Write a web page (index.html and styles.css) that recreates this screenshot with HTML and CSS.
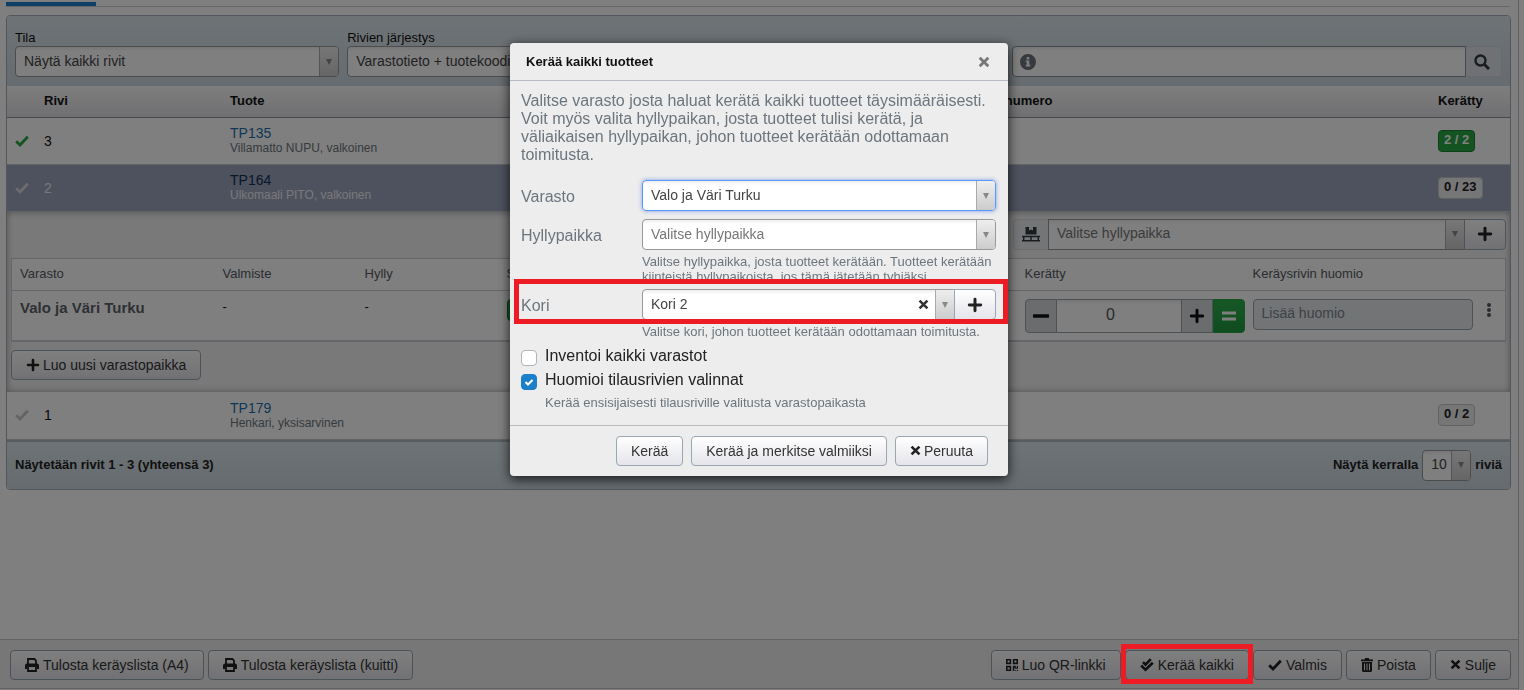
FILE: index.html
```
<!DOCTYPE html>
<html lang="fi">
<head>
<meta charset="utf-8">
<title>Kerää kaikki tuotteet</title>
<link rel="stylesheet" href="styles.css">
</head>
<body>
<svg class="sprite" aria-hidden="true">
  <symbol id="check" viewBox="0 0 14 12"><path d="M1.2 6.2 5 10 12.8 1.8" fill="none" stroke="currentColor" stroke-width="2.8"/></symbol>
  <symbol id="plus" viewBox="0 0 14 14"><path d="M7 2v10M2 7h10" fill="none" stroke="currentColor" stroke-width="2.600" stroke-linecap="round"/></symbol>
  <symbol id="minus" viewBox="0 0 14 14"><path d="M1 7h12" fill="none" stroke="currentColor" stroke-width="3" stroke-linecap="round"/></symbol>
  <symbol id="equals" viewBox="0 0 14 14"><path d="M0 4h14M0 10h14" fill="none" stroke="currentColor" stroke-width="3"/></symbol>
  <symbol id="cross" viewBox="0 0 12 12"><path d="M1.700 1.700l8.600 8.600M10.300 1.700l-8.600 8.600" fill="none" stroke="currentColor" stroke-width="2.800"/></symbol>
  <symbol id="print" viewBox="0 0 14 14"><path d="M3 6V1h6.500L11 2.500V6" fill="none" stroke="currentColor" stroke-width="1.800"/><path d="M2 5.500h10a2 2 0 0 1 2 2V11h-2V9H2v2H0V7.500a2 2 0 0 1 2-2z" fill="currentColor"/><path d="M3 9v4h8V9" fill="none" stroke="currentColor" stroke-width="1.800"/></symbol>
  <symbol id="qr" viewBox="0 0 12 12"><path d="M.8.8h3.600v3.600H.8zM7.600.8h3.600v3.600H7.600zM.8 7.600h3.600v3.600H.8z" fill="none" stroke="currentColor" stroke-width="1.600"/><path d="M6.800 6.800h3v2h1v-2H12v3H9v-1h-.7V12H6.800zM9.200 11h1v1h-1zM11 11h1v1h-1z" fill="currentColor"/></symbol>
  <symbol id="double" viewBox="0 0 14 14"><path d="M3 4.200 5.500 6.700 10.800 1.200M1.200 7.500 5.500 11.800 12.800 4.800" fill="none" stroke="currentColor" stroke-width="2.600"/></symbol>
  <symbol id="trash" viewBox="0 0 12 14"><path d="M0 1.500h3.500L4.300 0h3.400l.8 1.500H12v1.700H0zM1 4h10v8.500A1.500 1.500 0 0 1 9.500 14h-7A1.500 1.500 0 0 1 1 12.500zM3 5.500v6.800h1V5.500zm2.500 0v6.800h1V5.500zm2.500 0v6.800h1V5.500z" fill="currentColor" fill-rule="evenodd"/></symbol>
  <symbol id="search" viewBox="0 0 16 16"><circle cx="6.500" cy="6.500" r="5" fill="none" stroke="currentColor" stroke-width="2.400"/><path d="M10 10l5 5" stroke="currentColor" stroke-width="3"/></symbol>
  <symbol id="info" viewBox="0 0 16 16"><path d="M8 0a8 8 0 1 0 0 16A8 8 0 0 0 8 0zM6.700 3h2.600v2.400H6.700zM5.800 6.500h3.500v4.300h1v1.800H5.800v-1.800h1V8.300h-1z" fill="currentColor" fill-rule="evenodd"/></symbol>
  <symbol id="pallet" viewBox="0 0 18 15"><path d="M3.500 0H7v3.500l2-1 2 1V0h3.500v7.500h-11z" fill="currentColor"/><path d="M0 9.500h18M0 13.800h18M1.700 9v5M9 9v5M16.300 9v5" stroke="currentColor" stroke-width="1.500"/></symbol>
</svg>

<main class="page">
  <div class="tabs"><span class="tab-active"></span></div>

  <section class="panel">
    <form class="filters">
      <div class="field">
        <label for="tila">Tila</label>
        <div class="combo"><select id="tila"><option>Näytä kaikki rivit</option></select><span class="arrow"></span></div>
      </div>
      <div class="field">
        <label for="order">Rivien järjestys</label>
        <div class="combo"><select id="order"><option>Varastotieto + tuotekoodi</option></select><span class="arrow"></span></div>
      </div>
      <div class="search">
        <div class="search-box"><svg class="i16 muted"><use href="#info"/></svg><input type="text" aria-label="Haku"></div>
        <button type="button" class="search-btn" aria-label="Hae"><svg class="i16"><use href="#search"/></svg></button>
      </div>
    </form>

    <table class="rows">
      <colgroup><col class="c-check"><col class="c-rivi"><col><col class="c-sarja"><col class="c-done"></colgroup>
      <thead><tr><th></th><th>Rivi</th><th>Tuote</th><th>Sarjanumero</th><th>Kerätty</th></tr></thead>
      <tbody>
        <tr class="row"><td class="ok"><svg class="i14"><use href="#check"/></svg></td><td class="num">3</td><td><a href="#">TP135</a><small>Villamatto NUPU, valkoinen</small></td><td></td><td><span class="badge green">2 / 2</span></td></tr>
        <tr class="row selected"><td class="off"><svg class="i14"><use href="#check"/></svg></td><td class="num">2</td><td><a href="#">TP164</a><small>Ulkomaali PITO, valkoinen</small></td><td></td><td><span class="badge">0 / 23</span></td></tr>
        <tr>
          <td colspan="5" class="detail">
            <div class="detail-tools">
              <span class="addon"><svg class="pallet"><use href="#pallet"/></svg></span>
              <div class="combo"><select class="placeholder" aria-label="Hyllypaikka"><option>Valitse hyllypaikka</option></select><span class="arrow"></span></div>
              <button type="button" class="plus-btn" aria-label="Lisää"><svg class="i16"><use href="#plus"/></svg></button>
            </div>
            <table class="stock">
              <colgroup><col class="s-varasto"><col class="s-small"><col class="s-small"><col><col class="s-count"><col class="s-note"></colgroup>
              <thead><tr><th>Varasto</th><th>Valmiste</th><th>Hylly</th><th>Saldo</th><th>Kerätty</th><th>Keräysrivin huomio</th></tr></thead>
              <tbody><tr>
                <td class="store">Valo ja Väri Turku</td><td>-</td><td>-</td><td><span class="badge green saldo"></span></td>
                <td><div class="stepper"><button type="button" aria-label="Vähennä"><svg class="i16"><use href="#minus"/></svg></button><input type="text" value="0" aria-label="Kerätty"><button type="button" aria-label="Lisää"><svg class="i16"><use href="#plus"/></svg></button><button type="button" class="all" aria-label="Kaikki"><svg class="i14"><use href="#equals"/></svg></button></div></td>
                <td><div class="note"><input type="text" placeholder="Lisää huomio" aria-label="Keräysrivin huomio"><button type="button" class="dots" aria-label="Valikko"><i></i><i></i><i></i></button></div></td>
              </tr></tbody>
            </table>
            <button type="button" class="btn"><svg class="i14"><use href="#plus"/></svg>Luo uusi varastopaikka</button>
          </td>
        </tr>
        <tr class="row"><td class="off"><svg class="i14"><use href="#check"/></svg></td><td class="num">1</td><td><a href="#">TP179</a><small>Henkari, yksisarvinen</small></td><td></td><td><span class="badge">0 / 2</span></td></tr>
      </tbody>
    </table>

    <div class="pager">
      <span>Näytetään rivit 1 - 3 (yhteensä 3)</span>
      <div class="per-page"><label for="count">Näytä kerralla</label><div class="combo"><select id="count"><option>10</option></select><span class="arrow"></span></div><span>riviä</span></div>
    </div>
  </section>

  <footer class="actions">
    <button type="button" class="btn"><svg class="i14"><use href="#print"/></svg>Tulosta keräyslista (A4)</button>
    <button type="button" class="btn"><svg class="i14"><use href="#print"/></svg>Tulosta keräyslista (kuitti)</button>
    <button type="button" class="btn push"><svg class="i12"><use href="#qr"/></svg>Luo QR-linkki</button>
    <div class="marked"><button type="button" class="btn"><svg class="i14"><use href="#double"/></svg>Kerää kaikki</button><span class="frame"></span></div>
    <button type="button" class="btn"><svg class="i14"><use href="#check"/></svg>Valmis</button>
    <button type="button" class="btn"><svg class="trash"><use href="#trash"/></svg>Poista</button>
    <button type="button" class="btn"><svg class="i11"><use href="#cross"/></svg>Sulje</button>
  </footer>
</main>

<div class="overlay">
  <section class="modal" role="dialog" aria-labelledby="dlg-title">
    <header><h2 id="dlg-title">Kerää kaikki tuotteet</h2><button type="button" class="close" aria-label="Sulje"><svg class="i12"><use href="#cross"/></svg></button></header>
    <div class="body">
      <p>Valitse varasto josta haluat kerätä kaikki tuotteet täysimääräisesti. Voit myös valita hyllypaikan, josta tuotteet tulisi kerätä, ja väliaikaisen hyllypaikan, johon tuotteet kerätään odottamaan toimitusta.</p>
      <div class="form-row">
        <label for="m-store">Varasto</label>
        <div class="combo focus"><select id="m-store"><option>Valo ja Väri Turku</option></select><span class="arrow"></span></div>
      </div>
      <div class="form-row shelf">
        <label for="m-shelf">Hyllypaikka</label>
        <div class="combo"><select id="m-shelf" class="placeholder"><option>Valitse hyllypaikka</option></select><span class="arrow"></span></div>
        <small>Valitse hyllypaikka, josta tuotteet kerätään. Tuotteet kerätään kiinteistä hyllypaikoista, jos tämä jätetään tyhjäksi.</small>
      </div>
      <div class="form-row basket">
        <label for="m-basket">Kori</label>
        <div class="group">
          <div class="combo"><select id="m-basket"><option>Kori 2</option></select><button type="button" class="clear" aria-label="Tyhjennä"><svg class="i11"><use href="#cross"/></svg></button><span class="arrow"></span></div>
          <button type="button" class="plus-btn" aria-label="Lisää kori"><svg class="i16"><use href="#plus"/></svg></button>
        </div>
        <small>Valitse kori, johon tuotteet kerätään odottamaan toimitusta.</small>
        <span class="frame"></span>
      </div>
      <label class="tick"><input type="checkbox">Inventoi kaikki varastot</label>
      <label class="tick"><input type="checkbox" checked>Huomioi tilausrivien valinnat</label>
      <small class="tick-help">Kerää ensisijaisesti tilausriville valitusta varastopaikasta</small>
    </div>
    <div class="buttons">
      <button type="button" class="btn">Kerää</button>
      <button type="button" class="btn">Kerää ja merkitse valmiiksi</button>
      <button type="button" class="btn"><svg class="i11"><use href="#cross"/></svg>Peruuta</button>
    </div>
  </section>
</div>
</body>
</html>
```
FILE: styles.css
```
* { box-sizing: border-box; }
body { margin: 0; background: #fff; color: #111; font: 13px/16px "Liberation Sans", Arial, sans-serif; }
button, input, select { font: inherit; color: inherit; margin: 0; }
button { cursor: pointer; padding: 0; }
svg { flex: none; display: block; }
.sprite { position: absolute; width: 0; height: 0; }
.i11 { width: 11px; height: 11px; }
.i12 { width: 12px; height: 12px; }
.i14 { width: 14px; height: 14px; }
.i16 { width: 16px; height: 16px; }
.trash { width: 12px; height: 14px; }
.pallet { width: 18px; height: 15px; }
.muted { color: #6c757d; }
small { font-size: 12px; line-height: 15px; color: #6c757d; display: block; }

.page { min-height: 100vh; display: flex; flex-direction: column; margin-right: 5px; padding-top: 2px; border-right: 1px solid #c0c0c8; }
.tabs { height: 5px; margin: 0 8px 8px 6px; border-bottom: 1px solid #c8ccd4; }
.tab-active { display: block; width: 90px; height: 4px; background: #1c7fc9; }

.panel { margin: 0 7px 0 6px; border: 1px solid #a3afb9; border-radius: 4px; overflow: hidden; }
.filters { display: grid; grid-template-columns: 324fr 324fr 324fr 490fr; gap: 8px; align-items: end; height: 70px; padding: 0 8px 9px; background: linear-gradient(#dce6ec, #cbd7de); }
.field label { display: block; }

.combo { display: flex; align-items: stretch; height: 31px; flex: 1; border: 1px solid #999; border-radius: 4px; background: linear-gradient(#eee, #fff 15%, #fff); color: #444; font-size: 14px; overflow: hidden; }
.combo select { flex: 1; min-width: 0; appearance: none; border: 0; padding: 0 8px 2px; background: none; outline: 0; }
.combo .placeholder { color: #777; }
.arrow { flex: none; width: 19px; border-left: 1px solid #aaa; background: linear-gradient(#eee, #ccc); display: flex; align-items: center; justify-content: center; }
.arrow::before { content: ""; border: 3px solid transparent; border-top: 6px solid #888; border-bottom: 0; }
.combo.focus { border-color: #5897fb; box-shadow: 0 0 4px rgba(60, 110, 220, .6); }

.search { grid-column: 4; display: flex; height: 31px; }
.search-box { flex: 1; display: flex; align-items: center; gap: 6px; padding: 0 7px; border: 1px solid #8b9298; border-radius: 4px 0 0 4px; background: linear-gradient(#eee, #fff 15%); }
.search-box input { flex: 1; border: 0; background: none; outline: 0; }
.search-btn { width: 36px; border: 1px solid #d0d6dc; border-left: 0; border-radius: 0 4px 4px 0; background: #dfe3e8; display: flex; align-items: center; padding-left: 8px; color: #343a40; }

table { width: 100%; border-collapse: collapse; table-layout: fixed; }
td, th { padding: 0; text-align: left; }
.c-check { width: 29px; }
.c-rivi { width: 186px; }
.c-sarja { width: 465px; }
.c-done { width: 80px; }
.rows > * > tr > :first-child { padding-left: 8px; }
.rows > * > tr > * + * { padding-left: 8px; }
.rows > thead { background: linear-gradient(#fcfcfd, #e0e0e4); }
.rows > thead th { height: 31px; border-bottom: 1px solid #8b9298; }
.row { height: 47px; border-bottom: 1px solid #c2c8ce; }
.row a { display: block; color: #1b6fae; text-decoration: none; font-size: 14px; }
.num { font-size: 14px; }
.ok { color: #28a745; }
.off { color: #c8c8cc; }
.selected { background: #9ca4be; }
.selected .num, .selected small { color: #f0f0f4; }
.selected .off { color: #d8d8de; }
.selected a { color: #0c3050; }
.badge { display: inline-block; height: 22px; padding: 0 5px; border: 1px solid #c2c5c9; border-radius: 4px; background: #ececec; font-weight: bold; line-height: 17px; color: #222; }
.badge.green { background: #28a745; border-color: #1b7f33; color: #fff; }
.badge.saldo { width: 32px; }

.rows td.detail { padding: 7px 4px 12px; background: #f3f3f3; box-shadow: inset 0 0 7px rgba(0, 0, 0, .35); }
.detail-tools { display: flex; width: 493px; height: 31px; margin: 0 0 8px auto; }
.addon { width: 35px; display: flex; align-items: center; justify-content: center; border: 1px solid #d6d9dd; border-right: 0; border-radius: 4px 0 0 4px; background: #e9ebee; color: #343a40; }
.detail-tools .combo { border-radius: 0; }
.plus-btn { width: 42px; height: 31px; margin-left: -1px; border: 1px solid #99a7b4; border-radius: 0 4px 4px 0; background: linear-gradient(#fff, #e4e4ea); color: #222; display: flex; align-items: center; justify-content: center; }
.stock { background: #fff; border: 1px solid #c8ccd2; border-bottom-width: 2px; }
.stock th { height: 32px; padding-left: 8px; border-bottom: 1px solid #c8ccd2; font-weight: normal; color: #555b62; }
.stock td { height: 51px; padding: 8px 0 0 8px; vertical-align: top; }
.stock td.store { font-size: 15px; line-height: 17px; font-weight: bold; color: #5c6369; }
.s-varasto { width: 203px; }
.s-small { width: 142px; }
.s-count { width: 228px; }
.s-note { width: 261px; }
.stepper { display: flex; width: 220px; height: 34px; }
.stepper button { width: 32px; border: 1px solid #99a3ad; background: #d4d8dc; display: flex; align-items: center; justify-content: center; }
.stepper button:first-child { border-radius: 4px 0 0 4px; }
.stepper input { flex: 1; min-width: 0; border: 1px solid #99a3ad; border-width: 1px 0; padding: 0 16px 2px 0; text-align: center; font-size: 16px; color: #555; background: linear-gradient(#eee, #fff 15%); }
.stepper .all { border-color: #28a745; border-radius: 0 4px 4px 0; background: linear-gradient(#2fae4c, #1f9a3d); color: #fff; }
.note { display: flex; gap: 14px; }
.note input { width: 220px; height: 31px; padding: 0 8px 2px; border: 1px solid #99a3ad; border-radius: 4px; background: #e4e9ed; font-size: 14px; }
.note input::placeholder { color: #7c848c; opacity: 1; }
.dots { align-self: flex-start; display: grid; gap: 1px; border: 0; padding-top: 4px; background: none; }
.dots i { width: 4px; height: 4px; border-radius: 50%; background: #555b62; }

.btn { display: inline-flex; align-items: center; gap: 4px; height: 30px; padding: 0 14px 1px; border: 1px solid #99a7b0; border-radius: 4px; background: linear-gradient(#fff, #e4e4ea); color: #333; font-size: 14px; white-space: nowrap; }
.btn svg { color: #222; }
.detail .btn { display: flex; gap: 3px; margin-top: 8px; }

.pager { display: flex; align-items: center; justify-content: space-between; height: 49px; padding: 0 8px; border-top: 2px solid #adb8c0; background: linear-gradient(#dce6ec, #cbd7de); font-weight: bold; color: #222; }
.per-page { display: flex; align-items: center; gap: 4px; }
.per-page .combo { width: 49px; flex: none; font-weight: normal; }
.per-page .combo select { padding-right: 0; }

.actions { margin-top: auto; margin-bottom: 1px; display: flex; align-items: flex-start; gap: 4px; height: 50px; padding: 10px 7px 0 10px; border: 1px solid #c4c4c8; border-width: 1px 0; background: #efefef; }
.push { margin-left: auto; }
.marked { position: relative; display: flex; }
.frame { position: absolute; z-index: 30; border: 5px solid #ed1c24; pointer-events: none; }
.marked .frame { inset: -6px -4px -4px -4px; }

.overlay { position: fixed; inset: 0; z-index: 20; background: rgba(0, 0, 0, .5); display: flex; align-items: flex-start; justify-content: center; padding: 43px 6px 0 0; }
.modal { width: 498px; border-radius: 4px; background: #ededed; box-shadow: 0 3px 12px rgba(0, 0, 0, .8); }
.modal header { display: flex; justify-content: space-between; align-items: center; height: 38px; padding: 0 18px 0 16px; border-bottom: 1px solid #b8bcc8; }
.modal h2 { margin: 0; font-size: 13px; line-height: 16px; }
.modal small { font-size: 13px; }
.close, .clear { border: 0; background: none; }
.close { color: #777; }
.clear { padding: 0 6px; color: #333; }
.body { padding: 11px 12px 15px 11px; font-size: 16px; line-height: 18px; color: #6c757d; }
.body p { margin: 0 0 16px; }
.form-row { display: grid; grid-template-columns: 121px 1fr; margin-bottom: 8px; position: relative; }
.form-row > label { padding-top: 8px; }
.form-row small { grid-column: 2; margin-top: 4px; margin-right: -8px; }
.form-row.shelf { margin-bottom: 5px; }
.group { display: flex; }
.group .combo { border-radius: 4px 0 0 4px; }
.basket .frame { inset: -10px -12px auto -7px; height: 45px; }
.tick { display: flex; align-items: flex-start; gap: 8px; height: 24px; color: #222; }
.tick input { flex: none; width: 16px; height: 16px; margin-top: 3px; appearance: none; border: 1px solid #adb5bd; border-radius: 4px; background: #fff; }
.tick input:checked { border-color: #1c7fc9; background: #1c7fc9 url("data:image/svg+xml,%3Csvg xmlns='http://www.w3.org/2000/svg' viewBox='0 0 14 14'%3E%3Cpath d='M3.500 7l2.500 2.500 4.500-4.500' fill='none' stroke='%23fff' stroke-width='2'/%3E%3C/svg%3E") center no-repeat; }
.tick-help { margin-left: 24px; }
.buttons { display: flex; justify-content: flex-end; gap: 8px; height: 51px; padding: 10px 20px 0; border-top: 1px solid #b8bcc0; }
.buttons .btn { gap: 3px; }
```
